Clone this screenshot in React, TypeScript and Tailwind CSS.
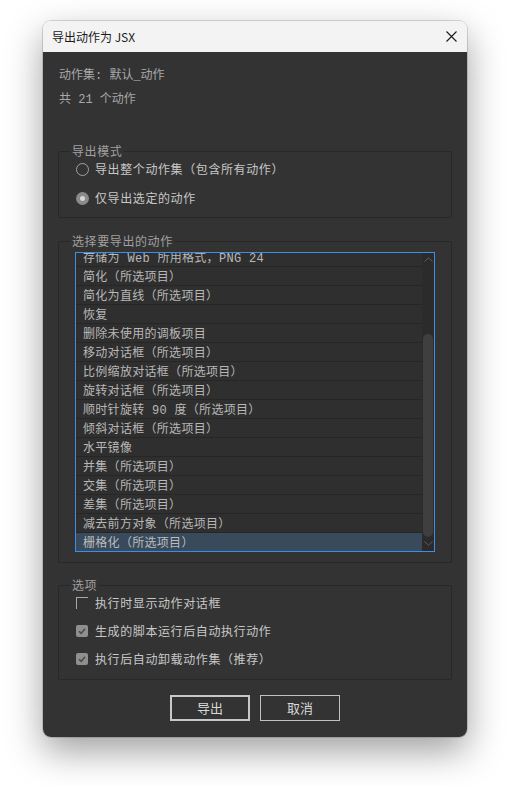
import React from "react";

const MONO = { fontFamily: '"Liberation Mono", "Noto Sans CJK SC", monospace' };
const UI = { fontFamily: '"Noto Sans CJK SC", "Noto Sans", sans-serif' };

const rows = [
  "存储为 Web 所用格式，PNG 24",
  "简化（所选项目）",
  "简化为直线（所选项目）",
  "恢复",
  "删除未使用的调板项目",
  "移动对话框（所选项目）",
  "比例缩放对话框（所选项目）",
  "旋转对话框（所选项目）",
  "顺时针旋转 90 度（所选项目）",
  "倾斜对话框（所选项目）",
  "水平镜像",
  "并集（所选项目）",
  "交集（所选项目）",
  "差集（所选项目）",
  "减去前方对象（所选项目）",
  "栅格化（所选项目）",
];

function Radio({ checked, label }: { checked?: boolean; label: string }) {
  return (
    <div className="h-[20px] flex items-center pl-[17px]">
      {checked ? (
        <span className="w-[13px] h-[13px] rounded-full bg-[#8a8a8a] flex items-center justify-center">
          <span className="w-[5px] h-[5px] rounded-full bg-[#d6d6d6]" />
        </span>
      ) : (
        <span className="w-[13px] h-[13px] rounded-full border border-[#a2a2a2]" />
      )}
      <span className="ml-[6px] text-[12px] tracking-[0.6px] text-[#c8c8c8] leading-[20px]">{label}</span>
    </div>
  );
}

function Check({ checked, label }: { checked?: boolean; label: string }) {
  return (
    <div className="h-[20px] flex items-center pl-[17px]">
      {checked ? (
        <span className="w-[12px] h-[12px] rounded-[2px] bg-[#8f8f8f] flex items-center justify-center">
          <svg width="10" height="10" viewBox="0 0 10 10">
            <path d="M2 5.2 L4.2 7.4 L8 2.8" stroke="#4a4a4a" strokeWidth="1.6" fill="none" />
          </svg>
        </span>
      ) : (
        <span className="w-[12px] h-[12px] border-t border-l border-[#a8a8a8]" />
      )}
      <span className="ml-[7px] text-[12px] tracking-[0.6px] text-[#c8c8c8] leading-[20px]">{label}</span>
    </div>
  );
}

function Group({
  title,
  className,
  children,
}: {
  title: string;
  className?: string;
  children: React.ReactNode;
}) {
  return (
    <fieldset className={"border border-[#282828] rounded-[2px] " + (className ?? "")}>
      <legend className="ml-[11px] px-[2px] text-[12px] tracking-[0.6px] leading-[16px] text-[#a0a0a0]">{title}</legend>
      {children}
    </fieldset>
  );
}

export default function App() {
  return (
    <div className="min-h-[786px] bg-white pt-[21px] pl-[43px]" style={UI}>
      <div className="w-[424px] h-[716px] rounded-[8px] overflow-hidden flex flex-col shadow-[0_0_0_1px_rgba(0,0,0,0.14),0_14px_36px_rgba(0,0,0,0.38)]">
        <div className="h-[31px] shrink-0 bg-[#f3f3f3] flex items-center justify-between pl-[9px] pr-[10px]">
          <span className="text-[12px] text-[#1a1a1a]">导出动作为 JSX</span>
          <svg width="11" height="11" viewBox="0 0 11 11">
            <path d="M0.5 0.5 L10.5 10.5 M10.5 0.5 L0.5 10.5" stroke="#1a1a1a" strokeWidth="1.1" />
          </svg>
        </div>
        <div className="flex-1 bg-[#333333] px-[15px] pt-[12px] flex flex-col">
          <div className="pl-[1px] text-[12px] leading-[24px] text-[#a8a8a8]" style={MONO}>
            <div>动作集: 默认_动作</div>
            <div>共 21 个动作</div>
          </div>

          <Group title="导出模式" className="mt-[31px] pb-[9px]">
            <div className="flex flex-col gap-[9px]">
              <Radio label="导出整个动作集（包含所有动作）" />
              <Radio checked label="仅导出选定的动作" />
            </div>
          </Group>

          <Group title="选择要导出的动作" className="mt-[15px] pt-[3px] pb-[10px]">
            <div className="px-[16px]">
              <div className="h-[300px] border border-[#3c8fe8] bg-[#2f2f2f] flex overflow-hidden" style={MONO}>
                <div className="flex-1 overflow-hidden">
                  <div className="-mt-[5px]">
                    {rows.map((r, i) => (
                      <div
                        key={i}
                        className={
                          "h-[19px] border-b border-[#262626] pl-[7px] pt-[3px] text-[12px] tracking-[0.3px] leading-[16px] whitespace-nowrap " +
                          (i === rows.length - 1 ? "bg-[#384a5c] text-[#bcbcbc]" : "text-[#b8b8b8]")
                        }
                      >
                        {r}
                      </div>
                    ))}
                  </div>
                </div>
                <div className="w-[12px] bg-[#2b2b2b] flex flex-col items-center">
                  <svg width="9" height="5" viewBox="0 0 9 5" className="mt-[4px]">
                    <path d="M0.5 4.5 L4.5 0.8 L8.5 4.5" stroke="#5e5e5e" fill="none" />
                  </svg>
                  <div className="mt-[72px] w-[10px] h-[203px] rounded-full bg-[#3f3f3f]" />
                  <svg width="9" height="5" viewBox="0 0 9 5" className="mt-[4px]">
                    <path d="M0.5 0.5 L4.5 4.2 L8.5 0.5" stroke="#5e5e5e" fill="none" />
                  </svg>
                </div>
              </div>
            </div>
          </Group>

          <Group title="选项" className="mt-[14px] pb-[10px]">
            <div className="flex flex-col gap-[8px]">
              <Check label="执行时显示动作对话框" />
              <Check checked label="生成的脚本运行后自动执行动作" />
              <Check checked label="执行后自动卸载动作集（推荐）" />
            </div>
          </Group>

          <div className="mt-[15px] flex justify-center gap-[10px]">
            <button className="w-[80px] h-[26px] border-2 border-[#c8c8c8] text-[13px] text-[#d8d8d8]">
              导出
            </button>
            <button className="w-[80px] h-[26px] border border-[#c0c0c0] text-[13px] text-[#d8d8d8]">
              取消
            </button>
          </div>
        </div>
      </div>
    </div>
  );
}
